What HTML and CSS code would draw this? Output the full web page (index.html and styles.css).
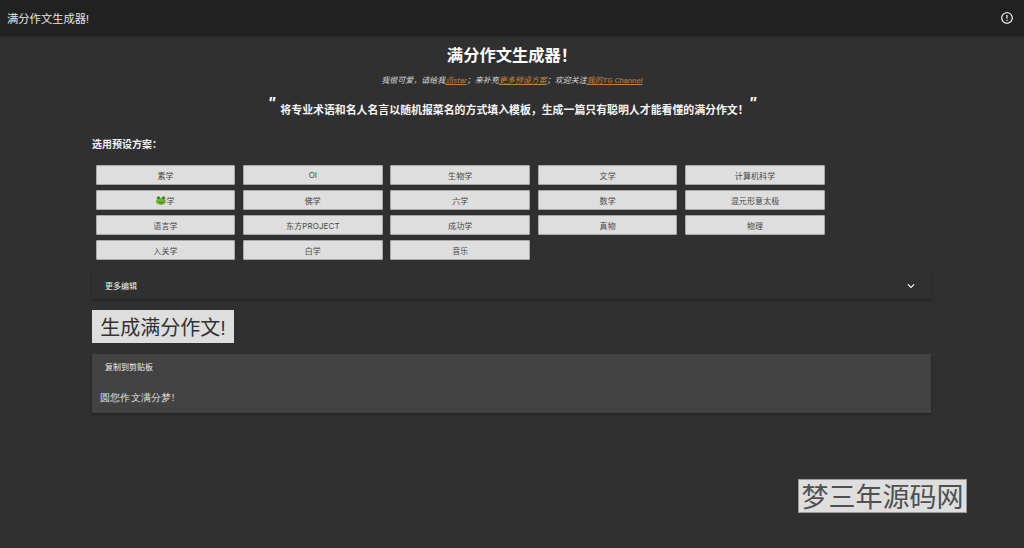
FILE: index.html
```html
<!DOCTYPE html>
<html lang="zh">
<head>
<meta charset="utf-8">
<title>满分作文生成器!</title>
<link rel="stylesheet" href="styles.css">
</head>
<body>
<header class="appbar">
  <span class="appbar-title">满分作文生成器!</span>
  <svg class="info-icon" viewBox="0 0 24 24" width="14" height="14"><path fill="#fff" d="M11 15h2v2h-2zm0-8h2v6h-2zm1-5C6.47 2 2 6.48 2 12s4.47 10 10 10 10-4.48 10-10S17.52 2 12 2zm0 18c-4.42 0-8-3.58-8-8s3.58-8 8-8 8 3.58 8 8-3.58 8-8 8z"/></svg>
</header>
<main class="page">
  <h1 class="title">满分作文生成器&#xFF01;</h1>
  <p class="subtitle">我很可爱&#xFF0C;请给我<a href="#">点star</a>&#xFF1B;来补充<a href="#">更多预设方案</a>&#xFF1B;欢迎关注<a href="#">我的TG Channel</a></p>
  <p class="quote"><span class="qmark qmark-open">"</span><span>将专业术语和名人名言以随机报菜名的方式填入模板&#xFF0C;生成一篇只有聪明人才能看懂的满分作文&#xFF01;</span><span class="qmark qmark-close">"</span></p>
  <section class="content">
    <h2 class="preset-label">选用预设方案&#xFF1A;</h2>
    <div class="presets">
      <button class="preset">素学</button>
      <button class="preset">OI</button>
      <button class="preset">生物学</button>
      <button class="preset">文学</button>
      <button class="preset">计算机科学</button>
      <button class="preset"><svg class="frog" viewBox="0 0 16 14" width="10" height="9"><circle cx="4" cy="3" r="3" fill="#5f9e2f"/><circle cx="12" cy="3" r="3" fill="#5f9e2f"/><ellipse cx="8" cy="8.5" rx="8" ry="5.5" fill="#6fb136"/><circle cx="4" cy="3" r="1.2" fill="#222"/><circle cx="12" cy="3" r="1.2" fill="#222"/><path d="M4 9.5q4 2.5 8 0" stroke="#2d5a12" fill="none"/></svg>学</button>
      <button class="preset">佛学</button>
      <button class="preset">六学</button>
      <button class="preset">数学</button>
      <button class="preset">混元形意太极</button>
      <button class="preset">语言学</button>
      <button class="preset">东方PROJECT</button>
      <button class="preset">成功学</button>
      <button class="preset">真物</button>
      <button class="preset">物理</button>
      <button class="preset">入关学</button>
      <button class="preset">白学</button>
      <button class="preset">音乐</button>
    </div>
    <div class="accordion">
      <span>更多编辑</span>
      <svg viewBox="0 0 24 24" width="14" height="14"><path fill="#fff" d="M16.59 8.59 12 13.17 7.41 8.59 6 10l6 6 6-6z"/></svg>
    </div>
    <button class="generate">生成满分作文!</button>
    <div class="result">
      <button class="copy">复制到剪贴板</button>
      <p class="result-text">圆您作文满分梦!</p>
    </div>
  </section>
</main>
<div class="watermark">梦三年源码网</div>
</body>
</html>
```
FILE: styles.css
```css
* { box-sizing: border-box; }
html, body { height: 100%; }
body {
  margin: 0;
  height: 548px;
  overflow: hidden;
  background: #303030;
  color: #fff;
  font-family: Roboto, "Noto Sans CJK SC", sans-serif;
  position: relative;
}
.appbar {
  height: 36px;
  background: #212121;
  display: flex;
  align-items: center;
  justify-content: space-between;
  padding: 0 10px 1px 7px;
  box-shadow: 0 1px 2px rgba(0,0,0,.2);
}
.appbar-title { font-size: 11.3px; color: #e6e6e6; }
.info-icon { display: block; }
.page { display: flex; flex-direction: column; align-items: center; }
.title {
  margin: 8.5px 0 0;
  font-size: 16.3px;
  line-height: 22px;
  font-weight: 700;
}
.subtitle {
  margin: 7px 0 0;
  font-size: 8px;
  line-height: 14px;
  font-style: italic;
  color: #ddd;
}
.subtitle a { color: #c08040; text-decoration: underline; }
.quote {
  margin: 9.5px 0 0;
  display: flex;
  align-items: flex-start;
  font-size: 10.9px;
  line-height: 18px;
  font-weight: 700;
  height: 30px;
  padding-top: 5px;
  color: #f6f6f6;
}
.qmark {
  font-family: "Liberation Sans", sans-serif;
  font-style: italic;
  font-weight: 700;
  font-size: 16px;
  line-height: 20px;
  height: 14px;
  margin-top: -8px;
  color: #fff;
}
.qmark-open { margin-right: 5px; }
.qmark-close { margin-left: 0; }
.content { width: 839px; margin-top: 11px; align-self: flex-start; margin-left: 92px; }
.preset-label {
  margin: 0;
  font-size: 10px;
  line-height: 14px;
  font-weight: 700;
  color: #f2f2f2;
}
.presets {
  margin-top: 13px;
  padding-left: 3.7px;
  display: grid;
  grid-template-columns: repeat(5, 139.6px);
  column-gap: 7.8px;
  row-gap: 5px;
}
.preset {
  height: 20px;
  padding: 0;
  border: 0;
  border-radius: 2px;
  background: #dedede;
  color: #484848;
  font-family: Inter, "Noto Sans CJK SC", sans-serif;
  font-size: 8px;
  letter-spacing: .1px;
  box-shadow: inset 0 0 0 1px #a8a8a8;
  display: flex;
  align-items: center;
  justify-content: center;
}
.frog { margin-right: 0; }
.accordion {
  margin-top: 12px;
  height: 27px;
  display: flex;
  align-items: center;
  justify-content: space-between;
  padding: 0 13px 0 13px;
  font-size: 8px;
  color: #eee;
  background: #303030;
  box-shadow: 0 1px 2px rgba(0,0,0,.45);
}
.generate {
  display: block;
  margin-top: 11px;
  width: 142px;
  height: 33px;
  padding: 0;
  border: 0;
  background: #dedede;
  color: #333;
  font-family: "Liberation Sans", "Noto Sans CJK SC", sans-serif;
  font-size: 20px;
}
.result {
  margin-top: 11px;
  height: 59px;
  background: #424242;
  box-shadow: 0 1px 2px rgba(0,0,0,.4);
  padding: 8px 13px 0 8px;
}
.copy {
  display: block;
  border: 0;
  background: none;
  padding: 0 0 0 5px;
  height: 12px;
  font-family: inherit;
  font-size: 8px;
  line-height: 12px;
  color: #eee;
}
.result-text {
  margin: 17px 0 0;
  font-family: "Liberation Serif", serif;
  font-size: 9.7px;
  line-height: 14px;
  letter-spacing: .2px;
  color: #e0e0e0;
}
.watermark {
  position: absolute;
  left: 798px;
  top: 479px;
  width: 169px;
  height: 34px;
  background: #dedede;
  border: 1px solid #999;
  color: #505050;
  font-family: "Noto Sans CJK SC", sans-serif;
  font-size: 27px;
  line-height: 31px;
  text-align: center;
  white-space: nowrap;
}
```
